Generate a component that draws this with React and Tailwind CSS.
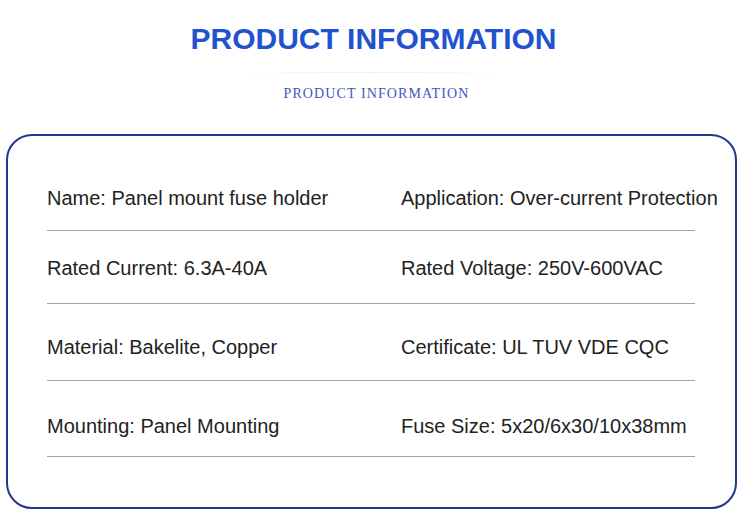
const rows = [
  { left: 'Name: Panel mount fuse holder', right: 'Application: Over-current Protection', pad: 'pt-[48px] pb-[18px]' },
  { left: 'Rated Current: 6.3A-40A', right: 'Rated Voltage: 250V-600VAC', pad: 'pt-[23px] pb-[21px]' },
  { left: 'Material: Bakelite, Copper', right: 'Certificate: UL TUV VDE CQC', pad: 'pt-[29px] pb-[19px]' },
  { left: 'Mounting: Panel Mounting', right: 'Fuse Size: 5x20/6x30/10x38mm', pad: 'pt-[31px] pb-[16px]' },
];

function SpecRow({ row }) {
  return (
    <div>
      <div className={`grid grid-cols-[354px_1fr] text-[20px] leading-[28px] text-[#222] whitespace-nowrap ${row.pad}`}>
        <span>{row.left}</span>
        <span>{row.right}</span>
      </div>
      <div className="h-px bg-[#a3a3a3]" />
    </div>
  );
}

export default function App() {
  return (
    <div className="w-[744px] h-[513px] bg-white overflow-hidden font-['Liberation_Sans',Arial,sans-serif]">
      <div className="pt-[21px] flex flex-col items-center">
        <h1 className="ml-[3px] text-[30px] leading-[36px] font-bold text-[#2253cf]">PRODUCT INFORMATION</h1>
        <div className="mt-[15px] w-[284px] h-px bg-gradient-to-r from-transparent via-[#f3efd9] to-transparent" />
        <p className="mt-[13px] ml-[9px] text-[14px] leading-[16px] tracking-[1.1px] text-[#4257c0] font-['Liberation_Serif',serif]">
          PRODUCT INFORMATION
        </p>
      </div>
      <div className="mt-[32px] ml-[6px] w-[731px] h-[375px] border-2 border-[#21368f] rounded-[26px] pl-[39px] pr-[40px]">
        {rows.map((r) => (
          <SpecRow key={r.left} row={r} />
        ))}
      </div>
    </div>
  );
}
